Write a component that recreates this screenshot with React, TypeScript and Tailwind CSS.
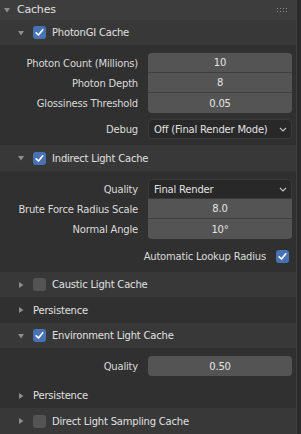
import React from 'react';

const font = { fontFamily: '"DejaVu Sans", "Liberation Sans", sans-serif' };

const TriDown = () => (
    <svg width="8" height="6" viewBox="0 0 8 6" className="shrink-0"><path d="M1 1 L7 1 L4 5.5 Z" fill="#8d8d8d" /></svg>
);
const TriRight = () => (
    <svg width="6" height="8" viewBox="0 0 6 8" className="shrink-0"><path d="M1 1 L5.5 4 L1 7 Z" fill="#8d8d8d" /></svg>
);

const Check = ({ on }: { on: boolean }) => (
    <div className={`w-[13px] h-[13px] rounded-[3px] shrink-0 flex items-center justify-center ${on ? 'bg-[#4772b3]' : 'bg-[#545454]'}`}>
        {on && (
            <svg width="11" height="11" viewBox="0 0 11 11"><path d="M2.2 5.8 L4.5 8 L8.8 2.8" fill="none" stroke="#ffffff" strokeWidth="1.7" strokeLinecap="round" strokeLinejoin="round" /></svg>
        )}
    </div>
);

const Chevron = () => (
    <svg width="8" height="5" viewBox="0 0 8 5"><path d="M1 1 L4 4 L7 1" fill="none" stroke="#bdbdbd" strokeWidth="1.2" /></svg>
);

interface SubHeaderProps { open: boolean; check?: boolean; label: string; h: string; bg: string; }

const SubHeader: React.FC<SubHeaderProps> = ({ open, check, label, h, bg }) => (
    <div className={`flex items-center pl-[17px] ${h} ${bg}`}>
        <div className="w-[8px] flex justify-center">{open ? <TriDown /> : <TriRight />}</div>
        <div className="w-[8px]" />
        {check !== undefined && (<><Check on={check} /><div className="w-[6px]" /></>)}
        <span className="text-[#e0e0e0]">{label}</span>
    </div>
);

const Label = ({ children }: { children: React.ReactNode }) => (
    <div className="w-[139px] shrink-0 text-right pr-[1px] text-[#dadada] whitespace-nowrap">{children}</div>
);

const NumField = ({ value, cls }: { value: string; cls: string }) => (
    <div className={`w-[144px] h-[20px] bg-[#545454] flex items-center justify-center text-[#e5e5e5] ${cls}`}>{value}</div>
);

const Dropdown = ({ value, cls }: { value: string; cls: string }) => (
    <div className={`w-[144px] h-[20px] bg-[#282828] border border-[#3a3a3a] flex items-center justify-between pl-[5px] pr-[4px] text-[#e2e2e2] ${cls}`}>
        <span className="whitespace-nowrap">{value}</span>
        <Chevron />
    </div>
);

const Row = ({ label, children }: { label: string; children: React.ReactNode }) => (
    <div className="flex items-center h-[20px]">
        <Label>{label}</Label>
        <div className="w-[9px]" />
        {children}
    </div>
);

export default function App() {
    return (
        <div className="w-[301px] h-[434px] overflow-hidden flex bg-[#2a2a2a] text-[10px] tracking-[-0.2px]" style={font}>
            <div className="w-[297px] flex flex-col border-r border-[#3f3f3f] overflow-hidden">
                {/* panel header */}
                <div className="h-[20px] shrink-0 bg-[#3d3d3d] flex items-center pl-[3px] pr-[8px]">
                    <TriDown />
                    <span className="ml-[6px] text-[11px] text-[#e0e0e0]">Caches</span>
                    <div className="flex-1" />
                    <div className="grid grid-cols-4 gap-x-[2px] gap-y-[2px] mr-[1px]">
                        {Array.from({ length: 8 }).map((_, i) => (
                            <div key={i} className="w-[1px] h-[1px] bg-[#8a8a8a]" />
                        ))}
                    </div>
                </div>

                <SubHeader open check={true} label="PhotonGI Cache" h="h-[25px]" bg="bg-[#383838]" />
                <div className="bg-[#303030] pt-[8px] pb-[6px] flex flex-col shrink-0">
                    <Row label="Photon Count (Millions)"><NumField value="10" cls="rounded-t-[4px] border-b border-[#3f3f3f]" /></Row>
                    <Row label="Photon Depth"><NumField value="8" cls="border-b border-[#3f3f3f]" /></Row>
                    <Row label="Glossiness Threshold"><NumField value="0.05" cls="rounded-b-[4px]" /></Row>
                    <div className="h-[6px]" />
                    <Row label="Debug"><Dropdown value="Off (Final Render Mode)" cls="rounded-[4px]" /></Row>
                </div>

                <SubHeader open check={true} label="Indirect Light Cache" h="h-[26px]" bg="bg-[#383838]" />
                <div className="bg-[#303030] pt-[8px] pb-[6px] flex flex-col shrink-0">
                    <Row label="Quality"><Dropdown value="Final Render" cls="rounded-t-[4px]" /></Row>
                    <Row label="Brute Force Radius Scale"><NumField value="8.0" cls="border-b border-[#3f3f3f]" /></Row>
                    <Row label="Normal Angle"><NumField value="10°" cls="rounded-b-[4px]" /></Row>
                    <div className="h-[7px]" />
                    <div className="h-[20px] flex items-center justify-end pr-[7px]">
                        <span className="text-[#dadada] mr-[10px]">Automatic Lookup Radius</span>
                        <Check on={true} />
                    </div>
                </div>

                <SubHeader open={false} check={false} label="Caustic Light Cache" h="h-[25px]" bg="bg-[#383838]" />
                <SubHeader open={false} label="Persistence" h="h-[26px]" bg="bg-[#303030]" />

                <SubHeader open check={true} label="Environment Light Cache" h="h-[25px]" bg="bg-[#383838]" />
                <div className="bg-[#303030] pt-[8px] flex flex-col shrink-0">
                    <Row label="Quality"><NumField value="0.50" cls="rounded-[4px]" /></Row>
                    <div className="h-[7px]" />
                </div>
                <SubHeader open={false} label="Persistence" h="h-[25px]" bg="bg-[#303030]" />

                <SubHeader open={false} check={false} label="Direct Light Sampling Cache" h="h-[26px] shrink-0" bg="bg-[#383838]" />
                <div className="flex-1 bg-[#303030]" />
            </div>
            <div className="flex-1 bg-[#2a2a2a]" />
        </div>
    );
}
